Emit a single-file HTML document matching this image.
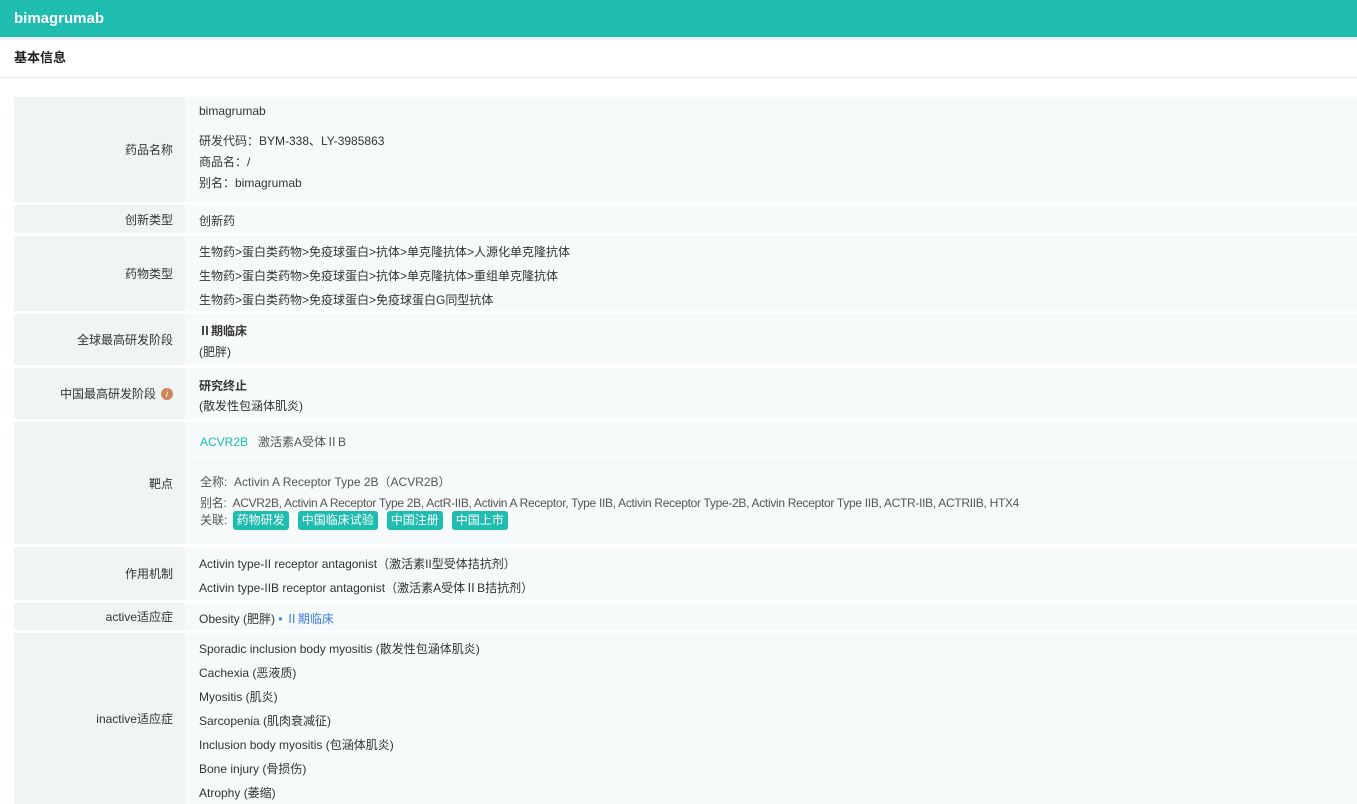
<!DOCTYPE html>
<html><head><meta charset="utf-8"><style>
*{margin:0;padding:0;box-sizing:border-box}
body{width:1357px;height:804px;overflow:hidden;background:#fff;font-family:"Liberation Sans","Noto Sans CJK SC",sans-serif;font-size:12px;color:#333;position:relative}
.hdr{position:absolute;left:0;top:0;width:1357px;height:37px;background:#1fbcb0;color:#fff;font-weight:bold;font-size:15px;line-height:37px;padding-left:14px}
.sec{position:absolute;left:0;top:40px;width:1357px;height:38px;border-bottom:1px solid #e8e8e8;font-weight:bold;font-size:13px;line-height:36px;padding-left:14px;color:#222;background:#fff}
.top{position:absolute;left:0;top:37px;width:1357px;height:3px;background:#f2f4f4}
.r{position:absolute;left:14px;width:1343px}
.l{position:absolute;left:0;top:0;bottom:0;width:171px;background:#eef5f4;text-align:right;padding-right:12px;display:flex;align-items:center;justify-content:flex-end}
.v{position:absolute;left:171px;top:0;bottom:0;right:0;background:#f7fafa;padding-left:14px}
.a{position:absolute;left:14px;white-space:nowrap}
.g{color:#555}
.tag{display:inline-block;background:#1fbcb0;color:#fff;border-radius:3px;padding:0 4px;line-height:19px;margin-right:9px}
.ln{position:absolute;left:0;right:0;height:1px;background:#fff}
</style></head><body>
<div class="hdr">bimagrumab</div><div class="top"></div>
<div class="sec">基本信息</div>

<div class="r" style="top:97px;height:105px"><div class="l">药品名称</div><div class="v">
<div class="a" style="top:7px">bimagrumab</div><div class="ln" style="top:26px"></div>
<div class="a" style="top:35px">研发代码：BYM-338、LY-3985863</div>
<div class="a" style="top:56px">商品名：/</div>
<div class="a" style="top:77px">别名：bimagrumab</div></div></div>

<div class="r" style="top:205px;height:28px"><div class="l">创新类型</div><div class="v"><div class="a" style="top:7px">创新药</div></div></div>

<div class="r" style="top:236px;height:75px"><div class="l">药物类型</div><div class="v">
<div class="a" style="top:7px">生物药&gt;蛋白类药物&gt;免疫球蛋白&gt;抗体&gt;单克隆抗体&gt;人源化单克隆抗体</div>
<div class="a" style="top:31px">生物药&gt;蛋白类药物&gt;免疫球蛋白&gt;抗体&gt;单克隆抗体&gt;重组单克隆抗体</div>
<div class="a" style="top:55px">生物药&gt;蛋白类药物&gt;免疫球蛋白&gt;免疫球蛋白G同型抗体</div></div></div>

<div class="r" style="top:314px;height:51px"><div class="l">全球最高研发阶段</div><div class="v">
<div class="a" style="top:8px;font-weight:bold">Ⅱ期临床</div><div class="a" style="top:29px">(肥胖)</div></div></div>

<div class="r" style="top:368px;height:51px"><div class="l">中国最高研发阶段<span style="display:inline-block;width:12px;height:12px;border-radius:6px;background:#d0855a;color:#fff;font-size:9px;line-height:12px;text-align:center;margin-left:5px;font-style:italic">i</span></div><div class="v">
<div class="a" style="top:9px;font-weight:bold">研究终止</div><div class="a" style="top:29px">(散发性包涵体肌炎)</div></div></div>

<div class="r" style="top:422px;height:122px"><div class="l">靶点</div><div class="v">
<div class="a" style="top:11px;left:15px"><span style="color:#1fbcb0">ACVR2B</span>&nbsp;&nbsp; <span class="g">激活素A受体ⅡB</span></div>
<div class="ln" style="top:34px"></div>
<div class="a g" style="top:51px;left:15px">全称:&nbsp; Activin A Receptor Type 2B（ACVR2B）</div>
<div class="a g" style="top:72px;left:15px;letter-spacing:-0.3px">别名:&nbsp; ACVR2B, Activin A Receptor Type 2B, ActR-IIB, Activin A Receptor, Type IIB, Activin Receptor Type-2B, Activin Receptor Type IIB, ACTR-IIB, ACTRIIB, HTX4</div>
<div class="a g" style="top:89px;left:15px">关联: <span class="tag" style="margin-left:2px">药物研发</span><span class="tag">中国临床试验</span><span class="tag">中国注册</span><span class="tag">中国上市</span></div></div></div>

<div class="r" style="top:547px;height:53px"><div class="l">作用机制</div><div class="v">
<div class="a" style="top:8px">Activin type-II receptor antagonist（激活素II型受体拮抗剂）</div>
<div class="a" style="top:32px">Activin type-IIB receptor antagonist（激活素A受体ⅡB拮抗剂）</div></div></div>

<div class="r" style="top:603px;height:27px"><div class="l">active适应症</div><div class="v">
<div class="a" style="top:7px">Obesity (肥胖) <span style="color:#3a7be0">• Ⅱ期临床</span></div></div></div>

<div class="r" style="top:633px;height:171px"><div class="l">inactive适应症</div><div class="v">
<div class="a" style="top:7px">Sporadic inclusion body myositis (散发性包涵体肌炎)</div>
<div class="a" style="top:31px">Cachexia (恶液质)</div>
<div class="a" style="top:55px">Myositis (肌炎)</div>
<div class="a" style="top:79px">Sarcopenia (肌肉衰减征)</div>
<div class="a" style="top:103px">Inclusion body myositis (包涵体肌炎)</div>
<div class="a" style="top:127px">Bone injury (骨损伤)</div>
<div class="a" style="top:151px">Atrophy (萎缩)</div></div></div>
</body></html>
